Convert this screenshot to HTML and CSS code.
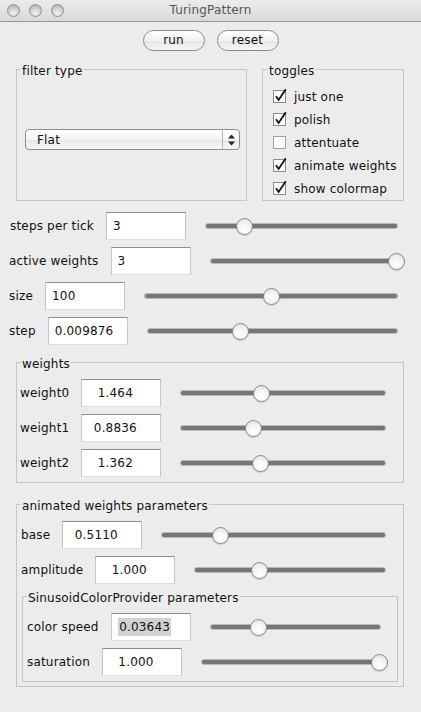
FILE: index.html
```html
<!DOCTYPE html>
<html>
<head>
<meta charset="utf-8">
<title>TuringPattern</title>
<link rel="stylesheet" href="styles.css">
</head>
<body>
<div class="window">
  <div class="titlebar">
    <div class="lights"><span class="light"></span><span class="light"></span><span class="light"></span></div>
    <div class="title">TuringPattern</div>
  </div>

  <div class="buttons">
    <button class="btn">run</button>
    <button class="btn">reset</button>
  </div>

  <div class="top">
    <div class="panel filter">
      <div class="ptitle t6">filter type</div>
      <div class="filter-body">
        <div class="select">
          <span class="select-text">Flat</span>
          <span class="select-arrows">
            <svg width="9" height="12" viewBox="0 0 9 12"><path d="M4.5 0.5 L8 4.5 L1 4.5 Z" fill="#222"/><path d="M4.5 11.5 L8 7.5 L1 7.5 Z" fill="#222"/></svg>
          </span>
        </div>
      </div>
    </div>
    <div class="panel toggles">
      <div class="ptitle t7">toggles</div>
      <div class="checks">
        <div class="check"><svg class="cb" width="15" height="15" viewBox="0 0 15 15"><rect x="0.5" y="2.5" width="12" height="12" fill="#fbfbfb" stroke="#8c8c8c"/><path d="M3 8.3 L5.6 12 L12.8 1.2" fill="none" stroke="#111" stroke-width="1.8"/></svg><span>just one</span></div>
        <div class="check"><svg class="cb" width="15" height="15" viewBox="0 0 15 15"><rect x="0.5" y="2.5" width="12" height="12" fill="#fbfbfb" stroke="#8c8c8c"/><path d="M3 8.3 L5.6 12 L12.8 1.2" fill="none" stroke="#111" stroke-width="1.8"/></svg><span>polish</span></div>
        <div class="check"><svg class="cb" width="15" height="15" viewBox="0 0 15 15"><rect x="0.5" y="2.5" width="12" height="12" fill="#fbfbfb" stroke="#a0a0a0"/></svg><span>attentuate</span></div>
        <div class="check"><svg class="cb" width="15" height="15" viewBox="0 0 15 15"><rect x="0.5" y="2.5" width="12" height="12" fill="#fbfbfb" stroke="#8c8c8c"/><path d="M3 8.3 L5.6 12 L12.8 1.2" fill="none" stroke="#111" stroke-width="1.8"/></svg><span>animate weights</span></div>
        <div class="check"><svg class="cb" width="15" height="15" viewBox="0 0 15 15"><rect x="0.5" y="2.5" width="12" height="12" fill="#fbfbfb" stroke="#8c8c8c"/><path d="M3 8.3 L5.6 12 L12.8 1.2" fill="none" stroke="#111" stroke-width="1.8"/></svg><span>show colormap</span></div>
      </div>
    </div>
  </div>

  <div class="rows main">
    <div class="row pl10 pr24">
      <span class="label">steps per tick</span>
      <div class="field">3</div>
      <div class="slider"><div class="track"></div><div class="rail"><span class="thumb" style="left:17%"></span></div></div>
    </div>
    <div class="row pl9 pr17">
      <span class="label">active weights</span>
      <div class="field">3</div>
      <div class="slider"><div class="track"></div><div class="rail"><span class="thumb" style="left:100%"></span></div></div>
    </div>
    <div class="row pl9 pr24">
      <span class="label">size</span>
      <div class="field">100</div>
      <div class="slider"><div class="track"></div><div class="rail"><span class="thumb" style="left:50%"></span></div></div>
    </div>
    <div class="row pl9 pr24">
      <span class="label">step</span>
      <div class="field">0.009876</div>
      <div class="slider"><div class="track"></div><div class="rail"><span class="thumb" style="left:36%"></span></div></div>
    </div>
  </div>

  <div class="panel wide weights">
    <div class="ptitle t6">weights</div>
    <div class="rows inner">
      <div class="row pl3 pr18">
        <span class="label">weight0</span>
        <div class="field c">1.464</div>
        <div class="slider"><div class="track"></div><div class="rail"><span class="thumb" style="left:38%"></span></div></div>
      </div>
      <div class="row pl3 pr18">
        <span class="label">weight1</span>
        <div class="field c">0.8836</div>
        <div class="slider"><div class="track"></div><div class="rail"><span class="thumb" style="left:34%"></span></div></div>
      </div>
      <div class="row pl3 pr18">
        <span class="label">weight2</span>
        <div class="field c">1.362</div>
        <div class="slider"><div class="track"></div><div class="rail"><span class="thumb" style="left:37.5%"></span></div></div>
      </div>
    </div>
  </div>

  <div class="panel wide animated">
    <div class="ptitle t6">animated weights parameters</div>
    <div class="rows inner">
      <div class="row pl4 pr18">
        <span class="label">base</span>
        <div class="field c">0.5110</div>
        <div class="slider"><div class="track"></div><div class="rail"><span class="thumb" style="left:24%"></span></div></div>
      </div>
      <div class="row pl4 pr18">
        <span class="label">amplitude</span>
        <div class="field c">1.000</div>
        <div class="slider"><div class="track"></div><div class="rail"><span class="thumb" style="left:32%"></span></div></div>
      </div>
    </div>
    <div class="panel sub">
      <div class="ptitle t6">SinusoidColorProvider parameters</div>
      <div class="rows inner">
        <div class="row pl4 pr17">
          <span class="label">color speed</span>
          <div class="field c"><span class="sel">0.03643</span></div>
          <div class="slider"><div class="track"></div><div class="rail"><span class="thumb" style="left:26%"></span></div></div>
        </div>
        <div class="row pl4 pr10">
          <span class="label">saturation</span>
          <div class="field c">1.000</div>
          <div class="slider"><div class="track"></div><div class="rail"><span class="thumb" style="left:100%"></span></div></div>
        </div>
      </div>
    </div>
  </div>
</div>
</body>
</html>
```

FILE: styles.css
```css
html, body {
  margin: 0;
  padding: 0;
}
body {
  background: #ececec;
  font-family: "DejaVu Sans", "Liberation Sans", sans-serif;
  font-size: 12px;
  letter-spacing: 0.18px;
  color: #111;
  width: 421px;
  height: 712px;
  overflow: hidden;
}
.window {
  display: flex;
  flex-direction: column;
}

/* title bar */
.titlebar {
  height: 21px;
  border-bottom: 1px solid #969696;
  background: linear-gradient(#ececec, #d9d9d9);
  display: flex;
  align-items: center;
  position: relative;
}
.lights {
  display: flex;
  gap: 9px;
  padding-left: 7px;
}
.light {
  width: 13px;
  height: 13px;
  box-sizing: border-box;
  border-radius: 50%;
  border: 1px solid #8f8f8f;
  background: radial-gradient(circle at 50% 75%, #f4f4f4 0%, #d4d4d4 45%, #a9a9a9 100%);
}
.title {
  position: absolute;
  left: 0;
  right: 0;
  text-align: center;
  color: #555;
  line-height: 21px;
  pointer-events: none;
}

/* buttons */
.buttons {
  display: flex;
  justify-content: center;
  gap: 12px;
  margin-top: 8px;
}
.btn {
  width: 62px;
  height: 21px;
  border: 1px solid #8a8a8a;
  border-radius: 11px;
  background: linear-gradient(#ffffff, #f1f1f1 50%, #e6e6e6 55%, #f7f7f7);
  font-family: inherit;
  font-size: 12px;
  letter-spacing: 0.18px;
  color: #111;
  padding: 0;
  line-height: 19px;
}

/* panels */
.panel {
  border: 1px solid #c5c5c5;
  box-sizing: border-box;
  display: flex;
  flex-direction: column;
}
.ptitle {
  margin-top: -6px;
  line-height: 15px;
  background: #ececec;
  align-self: flex-start;
  padding: 0 1px;
  color: #111;
}
.t6 { margin-left: 4px; }
.t7 { margin-left: 5px; }

.top {
  display: flex;
  gap: 15px;
  margin: 18px 17px 0 16px;
  height: 132px;
}
.filter {
  width: 231px;
}
.filter-body {
  flex: 1;
  display: flex;
  align-items: center;
  padding: 0 6px 0 8px;
}
.select {
  flex: 1;
  height: 21px;
  box-sizing: border-box;
  border: 1px solid #8e8e8e;
  border-radius: 4px;
  background: linear-gradient(#ffffff, #f3f3f3 50%, #e9e9e9 55%, #f8f8f8);
  display: flex;
  align-items: center;
}
.select-text {
  flex: 1;
  padding-left: 11px;
}
.select-arrows {
  width: 16px;
  height: 19px;
  border-left: 1px solid #b8b8b8;
  display: flex;
  align-items: center;
  justify-content: center;
}
.toggles {
  width: 142px;
}
.checks {
  padding: 6px 0 0 10px;
  display: flex;
  flex-direction: column;
}
.check {
  height: 23px;
  display: flex;
  align-items: center;
}
.cb {
  margin-right: 6px;
  margin-top: -3px;
}

/* rows */
.rows {
  display: flex;
  flex-direction: column;
  gap: 7px;
}
.main {
  margin-top: 11px;
}
.row {
  height: 28px;
  display: flex;
  align-items: center;
}
.pl3 { padding-left: 3px; }
.pl4 { padding-left: 4px; }
.pl9 { padding-left: 9px; }
.pl10 { padding-left: 10px; }
.pr10 { padding-right: 10px; }
.pr17 { padding-right: 17px; }
.pr18 { padding-right: 18px; }
.pr24 { padding-right: 24px; }

.label {
  white-space: nowrap;
  margin-right: 12px;
}
.field {
  width: 80px;
  height: 28px;
  box-sizing: border-box;
  flex: none;
  background: #fff;
  border-top: 1px solid #8e8e8e;
  border-left: 1px solid #c4c4c4;
  border-right: 1px solid #c4c4c4;
  border-bottom: 1px solid #dedede;
  line-height: 26px;
  padding-left: 6px;
  margin-right: 20px;
  white-space: nowrap;
}
.field.c {
  padding: 0 12px 0 0;
  text-align: center;
}
.sel {
  background: #d2d2d2;
  padding: 2px 1px;
}

.slider {
  flex: 1;
  position: relative;
  height: 18px;
}
.track {
  position: absolute;
  left: 0;
  right: 0;
  top: 7px;
  height: 4px;
  border-radius: 3px;
  background: #767676;
  box-shadow: 0 0 0 1px #bababa;
}
.rail {
  position: absolute;
  left: 8px;
  right: 8px;
  top: 0;
  bottom: 0;
}
.thumb {
  position: absolute;
  top: 1px;
  width: 17px;
  height: 17px;
  margin-left: -8px;
  box-sizing: border-box;
  border-radius: 50%;
  border: 1px solid #8a8a8a;
  background: radial-gradient(circle at 50% 70%, #ffffff 0%, #f4f4f4 50%, #d9d9d9 100%);
  box-shadow: 0 1px 1px rgba(0,0,0,0.15);
}

.wide {
  margin: 0 17px 0 16px;
}
.weights {
  margin-top: 17px;
}
.weights .inner {
  padding: 7px 0 5px 0;
}
.animated {
  margin-top: 21px;
  padding-bottom: 4px;
}
.animated > .inner {
  padding-top: 7px;
}
.sub {
  margin: 12px 5px 0 5px;
}
.sub .inner {
  padding: 7px 0 5px 0;
}
```
